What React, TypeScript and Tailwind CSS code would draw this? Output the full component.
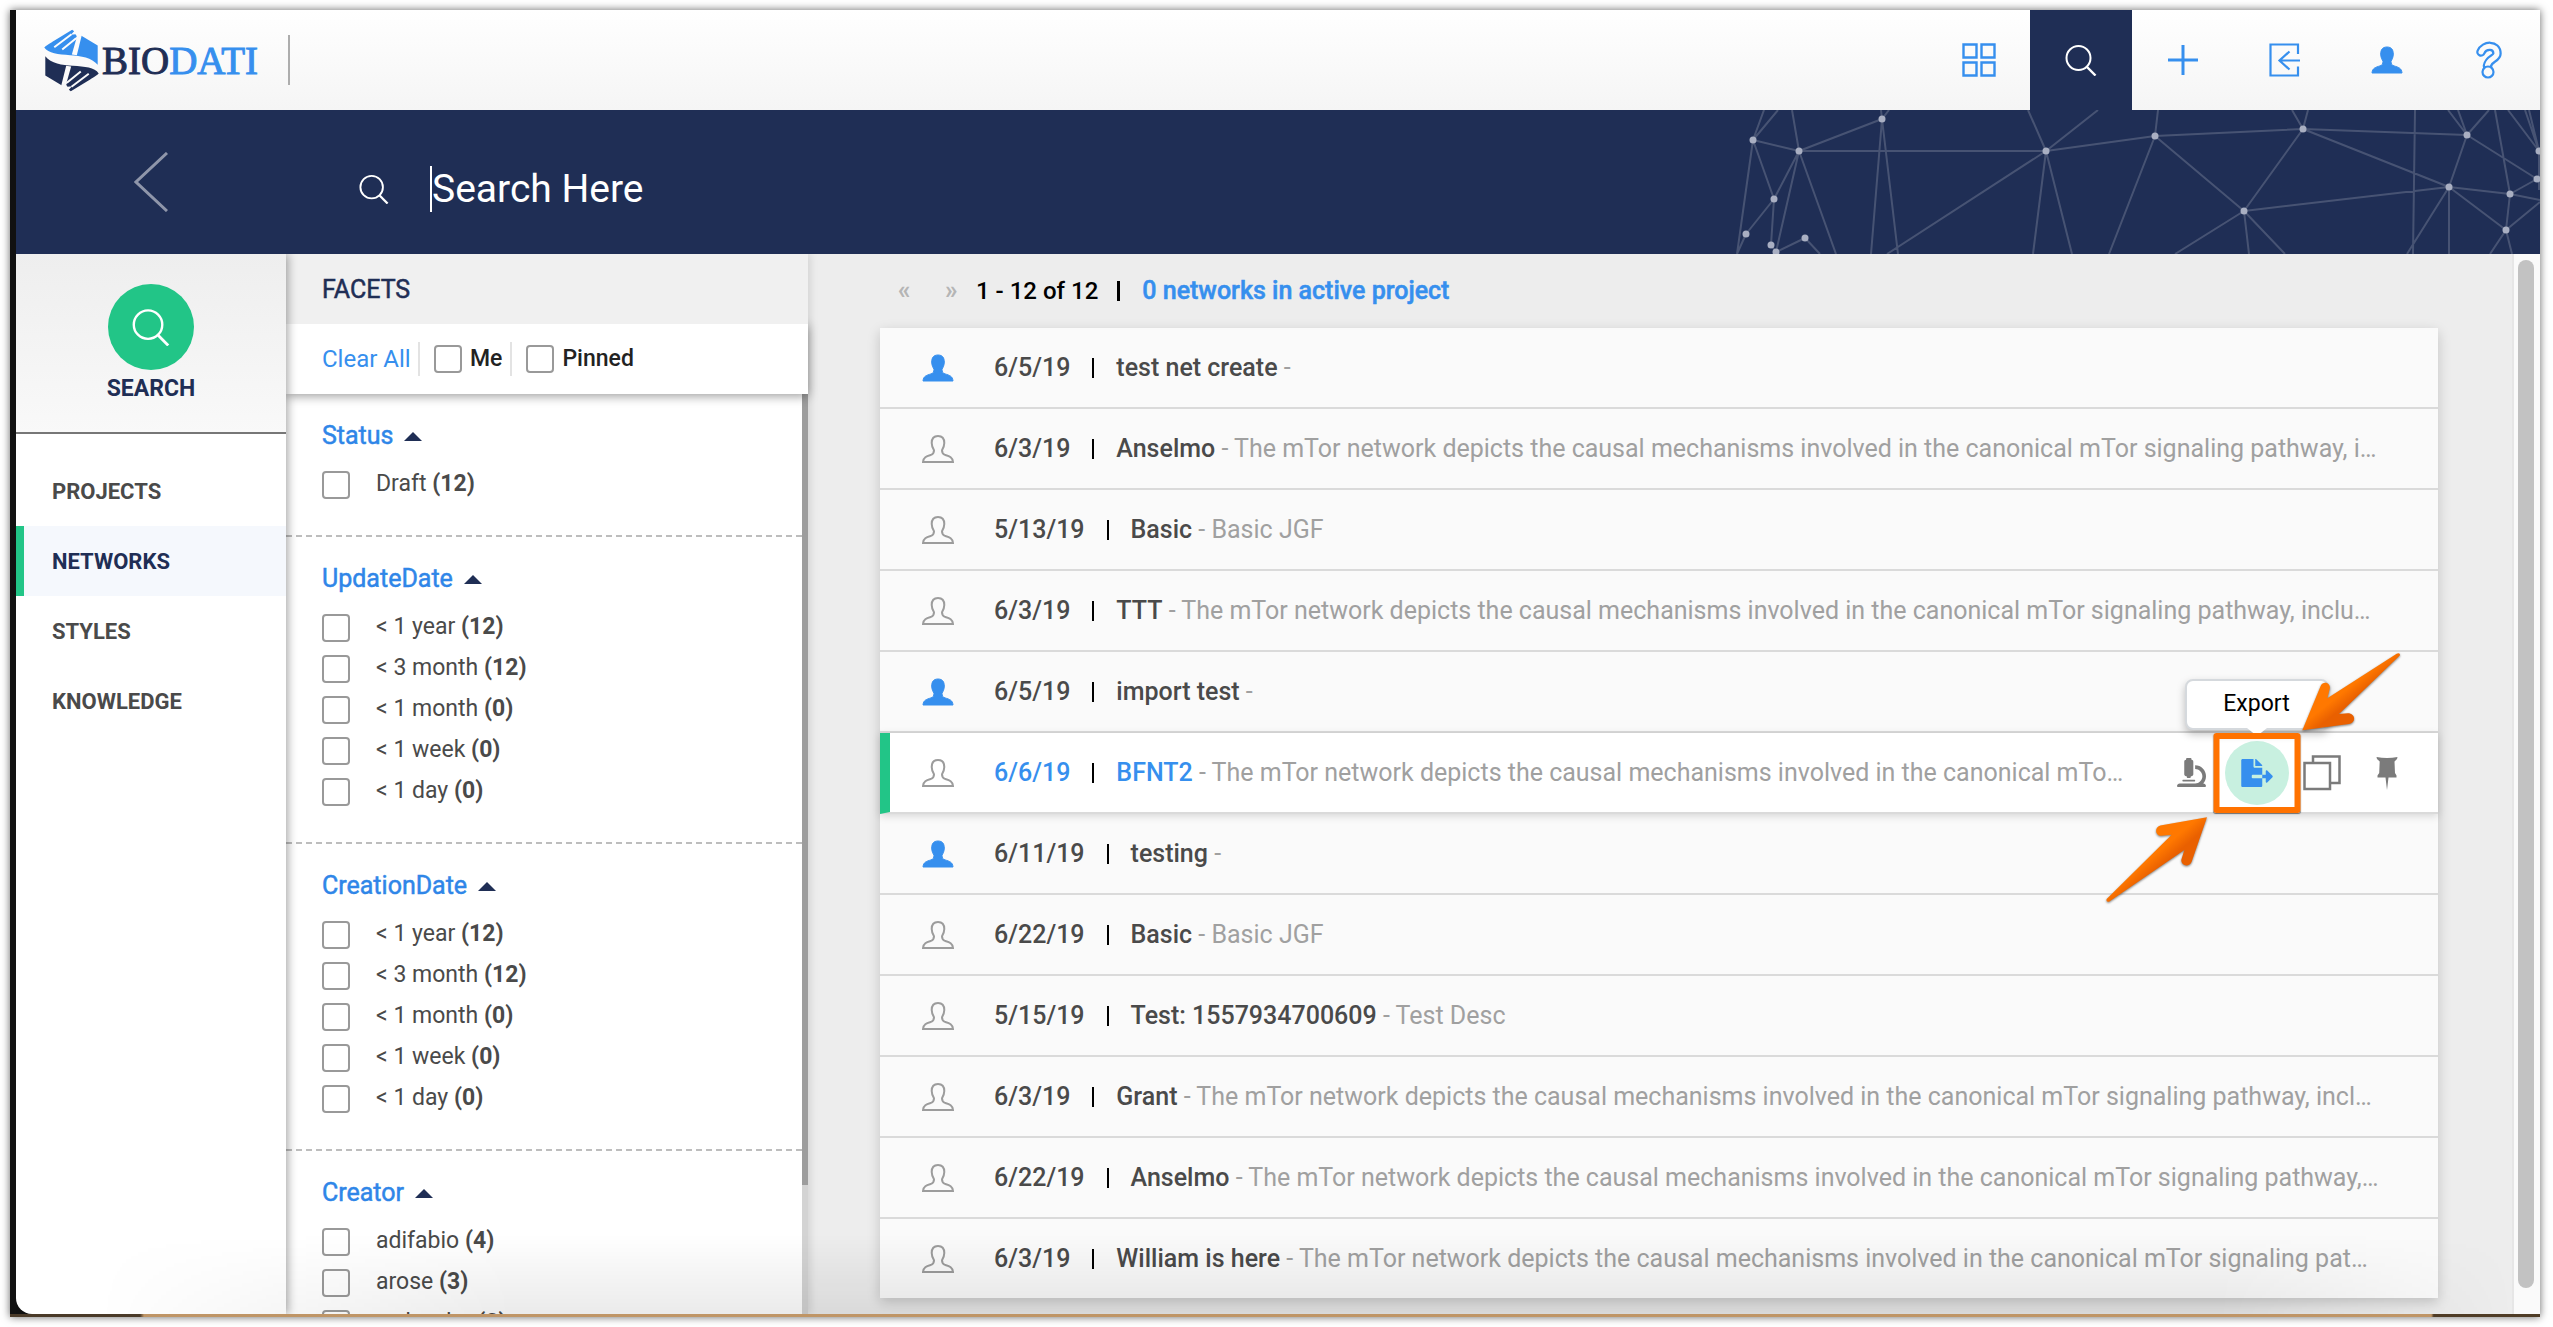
import { useState } from 'react';
import type { ReactNode } from 'react';
import { FaFileExport, FaMicroscope } from 'react-icons/fa';

const PERSON =
  'M16 1c4.6 0 6.3 3 6.3 7 0 3.300-1.300 5.600-2.300 7.200 0 2.800.9 4 3 4.700 4.600 1.400 7.600 2.200 8 7.100H1c.4-4.900 3.400-5.700 8-7.100 2.100-.7 3-1.900 3-4.700-1-1.600-2.300-3.900-2.300-7.200 0-4 1.700-7 6.300-7z';

function PersonIcon({ filled, className }: { filled?: boolean; className?: string }) {
  return (
    <svg viewBox="0 0 32 28" className={className} aria-hidden="true">
      <path d={PERSON} fill={filled ? '#368fee' : 'none'} stroke={filled ? '#368fee' : '#9c9c9c'} strokeWidth={filled ? 1 : 2} />
    </svg>
  );
}

function SearchIcon({ className }: { className?: string }) {
  return (
    <svg viewBox="0 0 32 32" className={className} fill="none" stroke="currentColor" strokeWidth="2" aria-hidden="true">
      <circle cx="13.500" cy="14" r="12" />
      <path d="M22 23l8.500 8.500" strokeWidth="2.400" />
    </svg>
  );
}

function Logo() {
  const half = 'M12 74C14 70 30 61 44 52L96 20l6 5-10 10 14-1 4 6-4 7 4 1 14-10 49 30v58C156 104 122 99 90 97 54 95 24 92 12 74z';
  const streaks = 'M42 73L94 34M66 80L108 46';
  const wedge = 'M109 46L125 37 110 97 95 95z';
  return (
    <a href="#home" className="flex items-center gap-[3px]">
      <svg viewBox="10 18 165 190" className="h-[63px] w-14" aria-hidden="true">
        <path d={half} fill="#368fee" />
        <path d={streaks} stroke="#fcfcfc" strokeWidth="6" />
        <path d={wedge} fill="#fcfcfc" />
        <g transform="rotate(180 94 113)">
          <path d={half} fill="#1f2e55" />
          <path d={streaks} stroke="#fafafa" strokeWidth="6" />
          <path d={wedge} fill="#fafafa" />
        </g>
      </svg>
      <span className="font-['Liberation_Serif',serif] text-[39px] leading-none text-[#1f2e55] [-webkit-text-stroke:1px_currentColor]">
        BIO<span className="text-[#368fee]">DATI</span>
      </span>
    </a>
  );
}

function TopButton({ label, active, children }: { label: string; active?: boolean; children: ReactNode }) {
  return (
    <button
      type="button"
      aria-label={label}
      className={`flex w-[102px] items-center justify-center self-stretch ${active ? 'bg-[#1f2e55] text-white' : 'text-[#368fee]'}`}
    >
      {children}
    </button>
  );
}

function TopBar() {
  return (
    <header className="flex h-[100px] shrink-0 items-center bg-linear-to-b from-white to-[#f5f5f5] pl-[27px]">
      <Logo />
      <div className="ml-[30px] h-[50px] w-[2px] bg-[#adadad]" />
      <nav className="ml-auto flex self-stretch">
        <TopButton label="Dashboard">
          <svg viewBox="0 0 34 34" className="size-[34px]" fill="none" stroke="currentColor" strokeWidth="2.400" aria-hidden="true">
            <path d="M1.500 1.500h13v13h-13zM19.500 1.500h13v13h-13zM1.500 19.500h13v13h-13zM19.500 19.500h13v13h-13z" />
          </svg>
        </TopButton>
        <TopButton label="Search" active>
          <SearchIcon className="size-8" />
        </TopButton>
        <TopButton label="Add">
          <svg viewBox="0 0 30 30" className="size-[30px]" stroke="currentColor" strokeWidth="3" aria-hidden="true">
            <path d="M15 0v30M0 15h30" />
          </svg>
        </TopButton>
        <TopButton label="Import">
          <svg viewBox="0 0 32 34" className="h-[34px] w-8" fill="none" stroke="currentColor" strokeWidth="2.200" aria-hidden="true">
            <path d="M29 11V1.500H1.500v31H29V23.500M31 17.500H10.500M20.500 8.500l-10 9 10 9" />
          </svg>
        </TopButton>
        <TopButton label="Account">
          <PersonIcon filled className="h-7 w-8" />
        </TopButton>
        <TopButton label="Help">
          <svg viewBox="0 0 28 38" className="h-[38px] w-7" fill="none" aria-hidden="true">
            <path d="M6 11C9 3.500 22 3 22 12.500 22 18 14 17 12.500 25" stroke="#368fee" strokeWidth="9.500" strokeLinecap="round" />
            <path d="M6 11C9 3.500 22 3 22 12.500 22 18 14 17 12.500 24" stroke="#fafafa" strokeWidth="5" strokeLinecap="round" />
            <circle cx="13" cy="31" r="5.500" fill="#fafafa" stroke="#368fee" strokeWidth="2.200" />
          </svg>
        </TopButton>
      </nav>
    </header>
  );
}

const NODES = [
  [53, 30], [99, 41], [182, 9], [346, 41], [455, 26], [603, 19], [767, 25], [74, 89], [46, 124],
  [71, 135], [76, 142], [105, 128], [544, 101], [749, 77], [810, 84], [837, 69], [806, 120], [839, 41],
];

const EDGES =
  'M53 30L99 41M53 30L64 0M53 30L78 0M53 30L37 144M53 30L74 89M99 41L182 9M99 41L92 0M99 41H346M99 41L74 89M99 41L76 142M99 41L136 144M182 9L181 0M182 9L189 0M182 9L171 144M182 9L198 144M346 41L328 0M346 41L398 0M346 41L187 144M346 41L333 144M346 41L372 144M346 41L455 26M455 26L458 0M455 26L409 144M455 26L544 101M455 26L603 19M603 19L592 0M603 19L608 0M603 19L544 101M603 19L767 25M603 19L749 77M544 101L749 77M544 101L475 144M544 101L549 144M544 101L585 144M715 0L713 144M749 77L767 25M749 77L707 144M749 77V144M749 77L806 120M749 77L810 84M767 25L748 0M767 25L758 0M767 25L789 0M767 25L837 69M810 84L795 0M810 84L837 69M810 84L806 120M810 84L840 90M806 120L840 92M806 120L790 144M806 120L812 144M839 41L808 0M839 41L825 0M839 41L829 0M839 41V80M74 89L46 124M74 89L71 135M46 124L37 144M71 135L76 142M76 142L105 128M105 128L120 144';

function SearchBanner() {
  const [query, setQuery] = useState('');
  return (
    <div className="relative flex h-36 shrink-0 items-center bg-[#1f2e55]">
      <svg viewBox="0 0 840 144" className="pointer-events-none absolute top-0 right-0 h-36 w-[840px]" aria-hidden="true">
        <path d={EDGES} stroke="#ffffff" strokeOpacity="0.18" strokeWidth="2" fill="none" />
        {NODES.map(([x, y]) => (
          <circle key={`${x}-${y}`} cx={x} cy={y} r="3.500" fill="#a9afc2" />
        ))}
      </svg>
      <button type="button" aria-label="Back" className="flex w-[270px] justify-center">
        <svg viewBox="0 0 34 60" className="h-[60px] w-[34px]" fill="none" stroke="#8f96aa" strokeWidth="3" aria-hidden="true">
          <path d="M33 1L2 30l31 29" />
        </svg>
      </button>
      <label className="flex flex-1 items-center pt-[14px] pl-[73px] text-white">
        <SearchIcon className="size-[30px]" />
        <span className="ml-[41px] h-[46px] w-[2px] bg-white" />
        <input
          type="text"
          aria-label="Search Here"
          placeholder="Search Here"
          value={query}
          onChange={(e) => setQuery(e.target.value)}
          className="relative h-12 flex-1 bg-transparent text-[39px] leading-none outline-none placeholder:text-white"
        />
      </label>
    </div>
  );
}

function Sidebar() {
  const items = ['PROJECTS', 'NETWORKS', 'STYLES', 'KNOWLEDGE'];
  return (
    <aside className="z-20 flex w-[270px] shrink-0 flex-col rounded-bl-2xl bg-white shadow-[2px_0_10px_rgba(0,0,0,0.35)]">
      <div className="flex h-[180px] flex-col items-center border-b-2 border-[#777] bg-linear-to-b from-[#eeeeee] to-[#f9f9f9] pt-[30px]">
        <button type="button" aria-label="Search" className="flex size-[86px] items-center justify-center rounded-full bg-[#22c587] text-white">
          <SearchIcon className="size-[38px]" />
        </button>
        <span className="mt-1 text-[23px] leading-[30px] font-bold text-[#1f2e55]">SEARCH</span>
      </div>
      <nav className="mt-[22px] flex flex-col">
        {items.map((item) => {
          const active = item === 'NETWORKS';
          return (
            <a
              key={item}
              href={`#${item.toLowerCase()}`}
              className={`flex h-[70px] items-center border-l-8 pl-7 text-[22px] font-bold ${
                active ? 'border-[#22c587] bg-[#f5f8fd] text-[#1f2e55]' : 'border-transparent text-[#4a4a4a]'
              }`}
            >
              {item}
            </a>
          );
        })}
      </nav>
    </aside>
  );
}

const BOX = 'size-7 shrink-0 appearance-none rounded-[4px] border-2 border-[#999] bg-white checked:bg-[#368fee]';

const PERIODS: [string, number][] = [
  ['< 1 year', 12],
  ['< 3 month', 12],
  ['< 1 month', 0],
  ['< 1 week', 0],
  ['< 1 day', 0],
];

const FACETS: { title: string; options: [string, number][] }[] = [
  { title: 'Status', options: [['Draft', 12]] },
  { title: 'UpdateDate', options: PERIODS },
  { title: 'CreationDate', options: PERIODS },
  { title: 'Creator', options: [['adifabio', 4], ['arose', 3], ['webtadut', 2]] },
];

function Facets() {
  return (
    <section className="z-10 flex w-[522px] shrink-0 flex-col bg-white shadow-[2px_0_8px_rgba(0,0,0,0.12)]">
      <h2 className="z-20 flex h-[70px] shrink-0 items-center bg-[#f0f0f0] pt-[2px] pl-9 text-[25px] text-[#1f2e55] [-webkit-text-stroke:0.5px_currentColor]">FACETS</h2>
      <div className="z-10 flex h-[70px] shrink-0 items-center pl-9 text-[23px] font-medium text-[#222] shadow-[0_2px_10px_rgba(0,0,0,0.4)]">
        <button type="button" className="w-[88px] text-left text-[24px] font-normal whitespace-nowrap text-[#368fee]">Clear All</button>
        <label className="ml-2 flex h-[34px] items-center gap-2 border-l-2 border-[#e3e3e3] pl-[14px]">
          <input type="checkbox" className={BOX} />
          Me
        </label>
        <label className="ml-2 flex h-[34px] items-center gap-2 border-l-2 border-[#e3e3e3] pl-[14px]">
          <input type="checkbox" className={BOX} />
          Pinned
        </label>
      </div>
      <div className="flex min-h-0 flex-1">
        <div className="flex-1 overflow-hidden">
          {FACETS.map((facet) => (
            <fieldset key={facet.title} className="border-b-2 border-dashed border-[#bdbdbd] pb-[30px]">
              <legend className="flex items-center gap-[11px] pt-[25px] pl-9 text-[25px] leading-[34px] text-[#2f86e8] [-webkit-text-stroke:0.5px_currentColor]">
                {facet.title}
                <span className="h-0 w-0 border-x-[9px] border-b-[9px] border-x-transparent border-b-[#1f2e55]" />
              </legend>
              <div className="pt-[11px]">
                {facet.options.map(([name, count]) => (
                  <label key={name} className="flex h-[41px] items-center pl-9 text-[23px] text-[#4a4a4a]">
                    <input type="checkbox" className={BOX} />
                    <span className="ml-[26px] whitespace-nowrap">
                      {name} <b>({count})</b>
                    </span>
                  </label>
                ))}
              </div>
            </fieldset>
          ))}
        </div>
        <div className="w-[6px] bg-[#d3d3d3]">
          <div className="h-[86%] bg-[#9d9d9d]" />
        </div>
      </div>
    </section>
  );
}

const MTOR = 'The mTor network depicts the causal mechanisms involved in the canonical mTor ';

type Network = { date: string; name: string; text: string; mine?: boolean; active?: boolean };

const NETWORKS: Network[] = [
  { date: '6/5/19', name: 'test net create', text: '', mine: true },
  { date: '6/3/19', name: 'Anselmo', text: `${MTOR}signaling pathway, i…` },
  { date: '5/13/19', name: 'Basic', text: 'Basic JGF' },
  { date: '6/3/19', name: 'TTT', text: `${MTOR}signaling pathway, inclu…` },
  { date: '6/5/19', name: 'import test', text: '', mine: true },
  { date: '6/6/19', name: 'BFNT2', text: 'The mTor network depicts the causal mechanisms involved in the canonical mTo…', active: true },
  { date: '6/11/19', name: 'testing', text: '', mine: true },
  { date: '6/22/19', name: 'Basic', text: 'Basic JGF' },
  { date: '5/15/19', name: 'Test: 1557934700609', text: 'Test Desc' },
  { date: '6/3/19', name: 'Grant', text: `${MTOR}signaling pathway, incl…` },
  { date: '6/22/19', name: 'Anselmo', text: `${MTOR}signaling pathway,…` },
  { date: '6/3/19', name: 'William is here', text: `${MTOR}signaling pat…` },
];

function ExportCallout() {
  return (
    <>
      <div
        role="tooltip"
        className="absolute bottom-full left-1/2 mb-[3px] flex h-[51px] w-36 -translate-x-1/2 items-center justify-center rounded-lg border-2 border-[#d5d9dd] bg-white text-[23px] text-black shadow-[0_4px_8px_rgba(0,0,0,0.25)]"
      >
        Export
        <span className="absolute top-full left-1/2 h-0 w-0 -translate-x-1/2 border-x-[10px] border-t-[8px] border-x-transparent border-t-white" />
      </div>
      <div className="pointer-events-none absolute top-1/2 left-1/2 h-20 w-[87px] -translate-x-1/2 -translate-y-1/2 rounded-[3px] border-[6px] border-[#ff7200] shadow-[0_1px_1px_rgba(0,0,0,0.5)]" />
      <svg viewBox="0 0 960 810" className="pointer-events-none absolute -top-[93px] -left-[125px] h-[270px] w-80 max-w-none drop-shadow-[0_1px_1px_rgba(0,0,0,0.5)]" aria-hidden="true">
        <defs>
          <linearGradient id="arrow" x1="0.3" y1="0.3" x2="0.7" y2="0.7">
            <stop offset="0.4" stopColor="#ff7800" />
            <stop offset="0.65" stopColor="#e96000" />
          </linearGradient>
        </defs>
        <path
          fill="url(#arrow)"
          d="M610 271L665 138C672 121 697 128 692 147L685 175L893 41Q904 37 903 46L720 222L746 220C770 220 772 248 750 252Z"
        />
        <path
          fill="url(#arrow)"
          d="M324 532L278 665C270 684 245 677 247 659L256 630L30 785Q20 787 23 777L218 584L188 587C166 588 166 558 188 556Z"
        />
      </svg>
    </>
  );
}

function RowActions() {
  return (
    <div className="ml-auto flex shrink-0 self-stretch text-[#7b7b7b]">
      <button type="button" aria-label="Inspect" className="flex w-[65px] items-center justify-center">
        <FaMicroscope className="size-[29px]" />
      </button>
      <div className="relative z-10 flex w-[65px] items-center justify-center">
        <button type="button" aria-label="Export" className="flex size-16 items-center justify-center rounded-full bg-[#c8f0e0] text-[#368fee]">
          <FaFileExport className="h-7 w-8" />
        </button>
        <ExportCallout />
      </div>
      <button type="button" aria-label="Duplicate" className="flex w-[65px] items-center justify-center">
        <svg viewBox="0 0 38 36" className="h-9 w-[38px]" fill="none" stroke="currentColor" strokeWidth="2.500" aria-hidden="true">
          <path d="M1.500 8H27v26H1.500zM10 8V1.500h26.500V28H27" />
        </svg>
      </button>
      <button type="button" aria-label="Pin" className="flex w-[65px] items-center justify-center">
        <svg viewBox="0 0 22 34" className="h-[34px] w-[22px]" fill="currentColor" aria-hidden="true">
          <path d="M.5 1Q11 3 21.500 1L21 3 18.500 5.500 19 17 20.500 19.500V21.500H12.500L11 34 9.500 21.500H1.500V19.500L3.200 17 3.700 5.500 1 3z" />
        </svg>
      </button>
    </div>
  );
}

function NetworkList() {
  return (
    <main className="flex min-w-0 flex-1 bg-[#ededed]">
      <div className="min-w-0 flex-1 pr-[74px] pl-[72px]">
        <div className="flex h-[74px] items-center pl-[18px] text-[24px] font-medium text-black">
          <button type="button" aria-label="Previous page" className="w-[47px] text-left text-[25px] font-bold text-[#b5b5b5]">«</button>
          <button type="button" aria-label="Next page" className="w-[31px] text-left text-[25px] font-bold text-[#b5b5b5]">»</button>
          <span>1 - 12 of 12</span>
          <span className="mr-[22px] ml-[19px] h-5 w-[3px] bg-black" />
          <a href="#active-project" className="text-[25px] text-[#368fee] [-webkit-text-stroke:0.5px_currentColor]">0 networks in active project</a>
        </div>
        <ul className="divide-y-2 divide-[#dadada] bg-[#fafafa] text-[25px] text-[#4a4a4a] shadow-[0_4px_12px_rgba(0,0,0,0.18)]">
          {NETWORKS.map((n, i) => (
            <li
              key={i}
              className={`flex h-[81px] items-center pr-[19px] last:h-[79px] ${
                n.active ? 'border-l-[10px] border-l-[#22c587] bg-white pl-8 text-[#368fee] shadow-[0_2px_8px_rgba(0,0,0,0.15)]' : 'pl-[42px]'
              }`}
            >
              <PersonIcon filled={n.mine} className="h-7 w-8 shrink-0" />
              <span className="ml-10 font-medium">{n.date}</span>
              <span className="mx-[22px] h-5 w-[2px] shrink-0 bg-black" />
              <a href="#network" className="whitespace-nowrap text-[#a0a0a0]">
                <span className={`font-medium ${n.active ? 'text-[#368fee]' : 'text-[#4a4a4a]'}`}>{n.name}</span> - {n.text}
              </a>
              {n.active && <RowActions />}
            </li>
          ))}
        </ul>
      </div>
      <div className="w-7 shrink-0 border-l-2 border-[#e6e6e6] bg-[#fafafa] px-1 pt-[6px] pb-[26px]">
        <div className="h-full w-4 rounded-full bg-[#c2c2c2]" />
      </div>
    </main>
  );
}

export default function App() {
  return (
    <div className="flex h-screen flex-col overflow-hidden bg-white pt-[10px] pr-[13px] pb-[10px] pl-[10px] font-[Roboto,sans-serif]">
      <div className="flex min-h-0 flex-1 flex-col shadow-[0_0_8px_rgba(0,0,0,0.6)]">
        <div className="relative flex min-h-0 flex-1 flex-col overflow-hidden border-l-[6px] border-[#111] bg-[#111]">
          <TopBar />
          <SearchBanner />
          <div className="flex min-h-0 flex-1 overflow-hidden">
            <Sidebar />
            <Facets />
            <NetworkList />
          </div>
          <div className="pointer-events-none absolute right-0 bottom-0 left-0 z-30 h-20 bg-linear-to-t from-black/8 to-transparent [mask-image:linear-gradient(to_right,transparent_80px,black_500px,black_2200px,transparent_2500px)]" />
        </div>
        <div className="h-[3px] shrink-0 bg-[linear-gradient(to_right,#4a3a28_0,#4a3a28_130px,#bf9566_134px,#bf9566_95.700%,#4f3c26_95.800%)]" />
      </div>
    </div>
  );
}
